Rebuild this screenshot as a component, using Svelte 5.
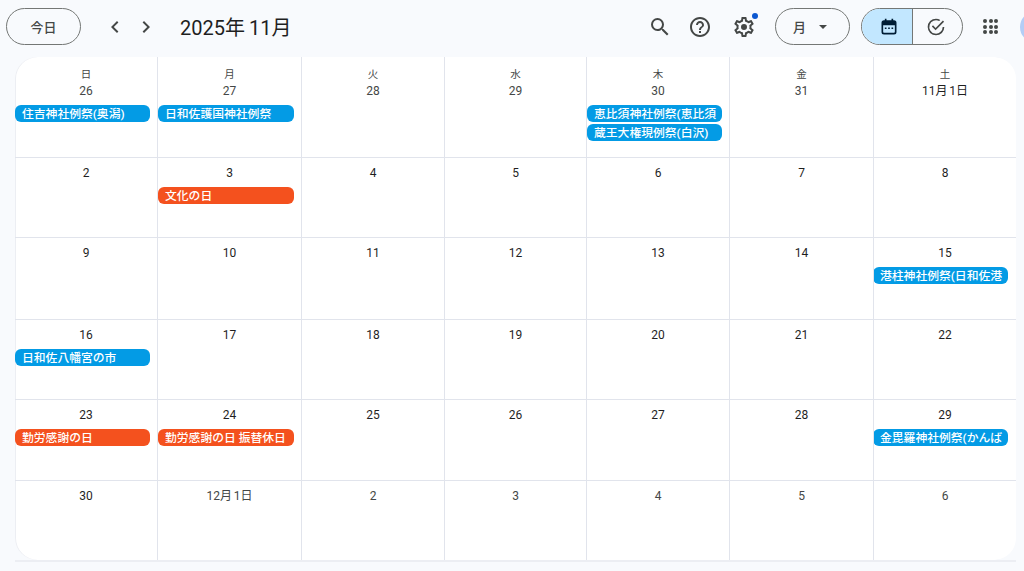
<script>
	const dayNames = ['日', '月', '火', '水', '木', '金', '土'];

	const blue = 'blue';
	const red = 'red';

	const weeks = [
		[
			{ label: '26', muted: true, events: [{ title: '住吉神社例祭(奥潟)', color: blue }] },
			{ label: '27', muted: true, events: [{ title: '日和佐護国神社例祭', color: blue }] },
			{ label: '28', muted: true },
			{ label: '29', muted: true },
			{ label: '30', muted: true, events: [
				{ title: '恵比須神社例祭(恵比須', color: blue },
				{ title: '蔵王大権現例祭(白沢)', color: blue }
			] },
			{ label: '31', muted: true },
			{ label: '11月 1日' }
		],
		[
			{ label: '2' },
			{ label: '3', events: [{ title: '文化の日', color: red }] },
			{ label: '4' },
			{ label: '5' },
			{ label: '6' },
			{ label: '7' },
			{ label: '8' }
		],
		[
			{ label: '9' },
			{ label: '10' },
			{ label: '11' },
			{ label: '12' },
			{ label: '13' },
			{ label: '14' },
			{ label: '15', events: [{ title: '港柱神社例祭(日和佐港', color: blue }] }
		],
		[
			{ label: '16', events: [{ title: '日和佐八幡宮の市', color: blue }] },
			{ label: '17' },
			{ label: '18' },
			{ label: '19' },
			{ label: '20' },
			{ label: '21' },
			{ label: '22' }
		],
		[
			{ label: '23', events: [{ title: '勤労感謝の日', color: red }] },
			{ label: '24', events: [{ title: '勤労感謝の日 振替休日', color: red }] },
			{ label: '25' },
			{ label: '26' },
			{ label: '27' },
			{ label: '28' },
			{ label: '29', events: [{ title: '金毘羅神社例祭(かんば', color: blue }] }
		],
		[
			{ label: '30' },
			{ label: '12月 1日', muted: true },
			{ label: '2', muted: true },
			{ label: '3', muted: true },
			{ label: '4', muted: true },
			{ label: '5', muted: true },
			{ label: '6', muted: true }
		]
	];
</script>

<div class="page">
	<header class="toolbar">
		<button class="today">今日</button>
		<div class="nav">
			<button class="icon-btn" aria-label="前月">
				<svg width="24" height="24" viewBox="0 0 24 24"><path d="M15.4 7.4 14 6l-6 6 6 6 1.4-1.4L10.8 12z" /></svg>
			</button>
			<button class="icon-btn" aria-label="翌月">
				<svg width="24" height="24" viewBox="0 0 24 24"><path d="M8.6 7.4 10 6l6 6-6 6-1.4-1.4L13.2 12z" /></svg>
			</button>
		</div>
		<h1>2025年 11月</h1>

		<div class="tools">
			<button class="icon-btn" aria-label="検索">
				<svg width="24" height="24" viewBox="0 0 24 24"><path d="M15.5 14h-.79l-.28-.27A6.47 6.47 0 0 0 16 9.5 6.5 6.5 0 1 0 9.5 16c1.61 0 3.09-.59 4.23-1.57l.27.28v.79l5 4.99L20.49 19l-4.99-5zm-6 0C7.01 14 5 11.99 5 9.5S7.01 5 9.5 5 14 7.01 14 9.5 11.99 14 9.5 14z" /></svg>
			</button>
			<button class="icon-btn" aria-label="ヘルプ">
				<svg width="24" height="24" viewBox="0 0 24 24"><path d="M11 18h2v-2h-2v2zm1-16C6.48 2 2 6.48 2 12s4.48 10 10 10 10-4.48 10-10S17.52 2 12 2zm0 18c-4.41 0-8-3.59-8-8s3.59-8 8-8 8 3.59 8 8-3.59 8-8 8zm0-14c-2.21 0-4 1.79-4 4h2c0-1.1.9-2 2-2s2 .9 2 2c0 2-3 1.75-3 5h2c0-2.25 3-2.5 3-5 0-2.21-1.79-4-4-4z" /></svg>
			</button>
			<button class="icon-btn gear" aria-label="設定">
				<svg width="24" height="24" viewBox="0 0 24 24"><path d="M19.43 12.98c.04-.32.07-.64.07-.98s-.03-.66-.07-.98l2.11-1.65c.19-.15.24-.42.12-.64l-2-3.46c-.12-.22-.39-.3-.61-.22l-2.49 1c-.52-.4-1.08-.73-1.69-.98l-.38-2.65A.49.49 0 0 0 14 2h-4c-.25 0-.46.18-.49.42l-.38 2.65c-.61.25-1.17.59-1.69.98l-2.49-1c-.23-.09-.49 0-.61.22l-2 3.46c-.13.22-.07.49.12.64l2.11 1.65c-.04.32-.07.65-.07.98s.03.66.07.98l-2.11 1.65c-.19.15-.24.42-.12.64l2 3.46c.12.22.39.3.61.22l2.49-1c.52.4 1.08.73 1.69.98l.38 2.65c.03.24.24.42.49.42h4c.25 0 .46-.18.49-.42l.38-2.65c.61-.25 1.17-.59 1.69-.98l2.49 1c.23.09.49 0 .61-.22l2-3.46c.12-.22.07-.49-.12-.64l-2.11-1.65zM17.45 11.27c.04.31.05.52.05.73s-.02.43-.05.73l-.14 1.13.89.7 1.08.84-.7 1.21-1.27-.51-1.04-.42-.9.68c-.43.32-.84.56-1.25.73l-1.06.43-.16 1.13-.2 1.35h-1.4l-.19-1.35-.16-1.13-1.06-.43c-.43-.18-.83-.41-1.23-.71l-.91-.7-1.06.43-1.27.51-.7-1.21 1.08-.84.89-.7-.14-1.13c-.03-.31-.05-.54-.05-.74s.02-.43.05-.73l.14-1.13-.89-.7-1.08-.84.7-1.21 1.27.51 1.04.42.9-.68c.43-.32.84-.56 1.25-.73l1.06-.43.16-1.13.2-1.35h1.39l.19 1.35.16 1.13 1.06.43c.43.18.83.41 1.23.71l.91.7 1.06-.43 1.27-.51.7 1.21-1.07.85-.89.7.14 1.13zM12 9a3 3 0 1 0 0 6 3 3 0 0 0 0-6z" /></svg>
				<span class="dot"></span>
			</button>
		</div>

		<button class="view-select">
			<span>月</span>
			<svg width="8" height="4" viewBox="0 0 10 5"><path d="M0 0h10L5 5z" /></svg>
		</button>

		<div class="switch">
			<button class="switch-cal" aria-label="カレンダー">
				<svg width="20" height="20" viewBox="0 0 24 24"><path d="M7 2h2v2h6V2h2v2h1a3 3 0 0 1 3 3v11a3 3 0 0 1-3 3H6a3 3 0 0 1-3-3V7a3 3 0 0 1 3-3h1V2zM5 10v8a1 1 0 0 0 1 1h12a1 1 0 0 0 1-1v-8H5zm2 2.5h2v2H7v-2zm4 0h2v2h-2v-2zm4 0h2v2h-2v-2z" /></svg>
			</button>
			<button class="switch-task" aria-label="タスク">
				<svg width="20" height="20" viewBox="0 0 24 24"><path d="M12 2a10 10 0 0 1 5.2 1.46l-1.46 1.46A8 8 0 1 0 20 12h2A10 10 0 1 1 12 2zm8.3 2.3 1.4 1.4L11.5 15.9 7 11.4l1.4-1.4 3.1 3.1z" /></svg>
			</button>
		</div>

		<button class="apps" aria-label="アプリ">
			{#each Array(9) as _}
				<i></i>
			{/each}
		</button>
		<div class="avatar"></div>
	</header>

	<main class="calendar">
		{#each weeks as week, w}
			{#each week as day, d}
				<div class="cell" class:last-col={d === 6} class:last-row={w === 5}>
					{#if w === 0}
						<div class="dow">{dayNames[d]}</div>
					{/if}
					<div class="date" class:muted={day.muted}>{day.label}</div>
					{#each day.events ?? [] as ev}
						<div class="chip {ev.color}">{ev.title}</div>
					{/each}
				</div>
			{/each}
		{/each}
	</main>
	<div class="foot-line"></div>
</div>

<style>
	:global(body) {
		background: #f8fafd;
		overflow: hidden;
	}

	.page {
		width: 1024px;
		height: 571px;
		overflow: hidden;
		font-family: Roboto, "Noto Sans CJK JP", sans-serif;
		color: #1f1f1f;
	}

	button {
		font-family: inherit;
		background: none;
		border: none;
		padding: 0;
		color: inherit;
	}

	.toolbar {
		display: flex;
		align-items: center;
		height: 53px;
		padding: 0 0 0 6px;
		width: 1060px;
	}

	.today {
		width: 75px;
		height: 37px;
		border: 1px solid #747775;
		border-radius: 19px;
		font-size: 13px;
		font-weight: 500;
		color: #444746;
		flex: none;
	}

	.nav {
		display: flex;
		gap: 7px;
		margin-left: 22px;
	}

	.icon-btn {
		display: flex;
		align-items: center;
		justify-content: center;
		fill: #444746;
		position: relative;
	}

	h1 {
		margin: 0 0 0 22px;
		font-size: 20px;
		font-weight: 400;
		word-spacing: -1px;
		color: #1f1f1f;
		width: 250px;
		white-space: nowrap;
		flex: none;
	}

	.tools {
		display: flex;
		gap: 16px;
		margin-left: 218px;
	}

	.gear {
		margin-left: 4px;
	}

	.dot {
		position: absolute;
		top: -2px;
		right: -2px;
		width: 6px;
		height: 6px;
		border-radius: 50%;
		background: #0b57d0;
	}

	.view-select {
		display: flex;
		align-items: center;
		justify-content: center;
		gap: 13px;
		width: 75px;
		height: 37px;
		margin-left: 19px;
		padding-right: 5px;
		border: 1px solid #747775;
		border-radius: 19px;
		font-size: 13px;
		font-weight: 500;
		color: #444746;
		fill: #444746;
		flex: none;
	}

	.switch {
		display: flex;
		box-sizing: border-box;
		width: 102px;
		height: 37px;
		margin-left: 11px;
		border: 1px solid #747775;
		border-radius: 19px;
		overflow: hidden;
		flex: none;
	}

	.switch button {
		display: flex;
		align-items: center;
		justify-content: center;
	}

	.switch-cal {
		width: 51px;
		padding-left: 3px;
		background: #c2e7ff;
		border-right: 1px solid #747775;
		fill: #001d35;
	}

	.switch .switch-task {
		flex: 1;
		padding-right: 4px;
		fill: #444746;
	}

	.apps {
		display: grid;
		grid-template-columns: repeat(3, 4px);
		gap: 1.5px;
		margin-left: 20px;
		flex: none;
	}

	.apps i {
		width: 4px;
		height: 4px;
		border-radius: 50%;
		background: #444746;
	}

	.avatar {
		width: 32px;
		height: 32px;
		margin-left: 22px;
		border-radius: 50%;
		background: #b3cdf6;
		flex: none;
	}

	.calendar {
		display: grid;
		grid-template-columns: 143px 144px 143px 142px 143px 144px 142px;
		grid-template-rows: 101px 80px 82px 80px 81px 79px;
		width: 1001px;
		margin: 4px 0 0 15px;
		background: #fff;
		border-radius: 22px;
		box-shadow: inset 1px 0 0 #eceef3;
		overflow: hidden;
	}

	.foot-line {
		width: 1001px;
		height: 2px;
		margin-left: 15px;
		background: #eceef3;
	}

	.cell {
		box-sizing: border-box;
		min-width: 0;
		border-right: 1px solid #e1e4ec;
		border-bottom: 1px solid #e1e4ec;
		overflow: hidden;
	}

	.last-col {
		border-right: none;
	}

	.last-row {
		border-bottom: none;
	}

	.dow {
		height: 15px;
		padding-top: 10px;
		line-height: 15px;
		text-align: center;
		font-size: 10.5px;
		font-weight: 400;
		color: #444746;
	}

	.date {
		height: 22px;
		padding-top: 7px;
		line-height: 16px;
		text-align: center;
		font-size: 12px;
		font-weight: 400;
		word-spacing: -1px;
		color: #1f1f1f;
	}

	.dow + .date {
		padding-top: 1px;
	}

	.date.muted {
		color: #444746;
	}

	.chip {
		box-sizing: border-box;
		width: calc(100% - 7px);
		height: 17px;
		margin: 0 0 2px 0;
		padding-left: 7px;
		border-radius: 6px;
		font-size: 11.8px;
		font-weight: 500;
		line-height: 18px;
		color: #fff;
		white-space: nowrap;
		overflow: hidden;
	}

	.last-col .chip {
		width: 135px;
		margin-left: -1px;
	}

	.blue {
		background: #039be5;
	}

	.red {
		background: #f4511e;
	}
</style>
